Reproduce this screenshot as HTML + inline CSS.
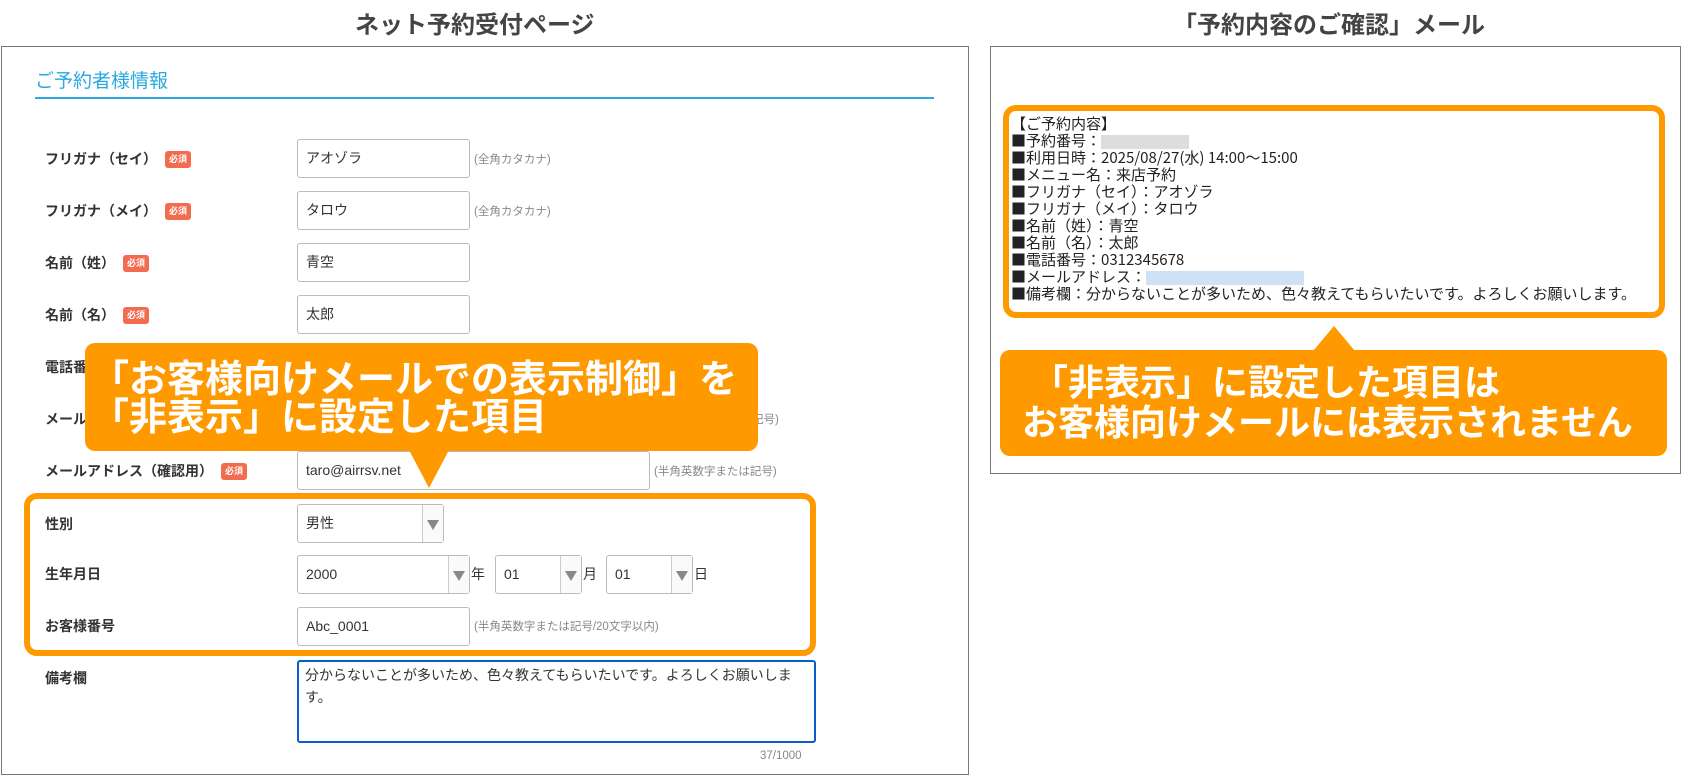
<!DOCTYPE html>
<html><head><meta charset="utf-8"><style>
*{margin:0;padding:0;box-sizing:border-box}
body{width:1683px;height:777px;background:#fff;position:relative;overflow:hidden;font-family:"Liberation Sans","Noto Sans CJK JP",sans-serif;color:#333}
.a{position:absolute;white-space:nowrap}
.t{font-size:24px;font-weight:bold;color:#444}
.lab{font-size:14px;font-weight:bold;color:#333;left:45px;line-height:20px}
.bd{display:inline-block;background:#f26c50;color:#fff;font-size:9px;font-weight:bold;border-radius:3px;padding:0 4px;height:17px;line-height:17px;vertical-align:middle;margin-left:8px;position:relative;top:-1px}
.in{position:absolute;border:1px solid #bbb;border-radius:3px;height:39px;font-size:14px;line-height:37px;padding-left:8px;background:#fff}
.hint{font-size:11.5px;color:#888;line-height:14px}
.sel::after{content:"";position:absolute;right:0;top:0;bottom:0;width:20px;border-left:1px solid #ccc;background:#fafafa}
.sel::before{content:"";position:absolute;right:4px;top:15px;border-left:6px solid transparent;border-right:6px solid transparent;border-top:10px solid #888;z-index:2}
.co{position:absolute;background:#ff9900;border-radius:10px;color:#fff;font-weight:bold}
.mail{font-size:15px;line-height:17px;color:#222;font-family:"Noto Sans CJK JP","Liberation Sans",sans-serif}
</style></head><body>
<div class="a t" style="left:355px;top:5px">ネット予約受付ページ</div>
<div class="a t" style="left:1173px;top:5px">「予約内容のご確認」メール</div>

<div class="a" style="left:1px;top:46px;width:968px;height:729px;border:1px solid #777"></div>
<div class="a" style="left:35px;top:66px;font-size:19px;color:#29a9e0">ご予約者様情報</div>
<div class="a" style="left:35px;top:97px;width:899px;height:2px;background:#29a9e0"></div>

<div class="a lab" style="top:149px">フリガナ（セイ）<span class="bd">必須</span></div>
<div class="in" style="left:297px;top:139px;width:173px">アオゾラ</div>
<div class="a hint" style="left:474px;top:153px">(全角カタカナ)</div>

<div class="a lab" style="top:201px">フリガナ（メイ）<span class="bd">必須</span></div>
<div class="in" style="left:297px;top:191px;width:173px">タロウ</div>
<div class="a hint" style="left:474px;top:205px">(全角カタカナ)</div>

<div class="a lab" style="top:253px">名前（姓）<span class="bd">必須</span></div>
<div class="in" style="left:297px;top:243px;width:173px">青空</div>

<div class="a lab" style="top:305px">名前（名）<span class="bd">必須</span></div>
<div class="in" style="left:297px;top:295px;width:173px">太郎</div>

<div class="a lab" style="top:357px">電話番号</div>
<div class="a lab" style="top:409px">メールアドレス</div>
<div class="a hint" style="left:752px;top:413px">記号)</div>

<div class="a lab" style="top:461px">メールアドレス（確認用）<span class="bd">必須</span></div>
<div class="in" style="left:297px;top:451px;width:353px">taro@airrsv.net</div>
<div class="a hint" style="left:654px;top:465px">(半角英数字または記号)</div>

<div class="a" style="left:24px;top:493px;width:792px;height:163px;border:6px solid #ff9900;border-radius:13px"></div>
<div class="a lab" style="top:514px">性別</div>
<div class="in sel" style="left:297px;top:504px;width:147px">男性</div>
<div class="a lab" style="top:564px">生年月日</div>
<div class="in sel" style="left:297px;top:555px;width:173px">2000</div>
<div class="a" style="left:471px;top:564px;font-size:14px">年</div>
<div class="in sel" style="left:495px;top:555px;width:87px">01</div>
<div class="a" style="left:583px;top:564px;font-size:14px">月</div>
<div class="in sel" style="left:606px;top:555px;width:87px">01</div>
<div class="a" style="left:694px;top:564px;font-size:14px">日</div>
<div class="a lab" style="top:616px">お客様番号</div>
<div class="in" style="left:297px;top:607px;width:173px">Abc_0001</div>
<div class="a hint" style="left:474px;top:620px">(半角英数字または記号/20文字以内)</div>

<div class="a lab" style="top:668px">備考欄</div>
<div class="a" style="left:297px;top:660px;width:519px;height:83px;border:2px solid #0a5cc8;border-radius:3px;font-size:14px;line-height:22px;padding:2px 6px;white-space:normal">分からないことが多いため、色々教えてもらいたいです。よろしくお願いしま す。</div>
<div class="a hint" style="left:760px;top:749px">37/1000</div>

<div class="co" style="left:85px;top:343px;width:673px;height:108px;font-size:38px;line-height:38px;padding:18px 0 0 6px">「お客様向けメールでの表示制御」を<br>「非表示」に設定した項目</div>
<div class="a" style="left:409px;top:450px;border-left:20px solid transparent;border-right:20px solid transparent;border-top:38px solid #ff9900"></div>

<div class="a" style="left:990px;top:46px;width:691px;height:428px;border:1px solid #777"></div>
<div class="a" style="left:1003px;top:105px;width:662px;height:213px;border:6px solid #ff9900;border-radius:13px"></div>
<div class="a mail" style="left:1011px;top:115px">【ご予約内容】<br>■予約番号：<span style="display:inline-block;width:88px;height:14px;background:#ddd;vertical-align:middle"></span><br>■利用日時：2025/08/27(水) 14:00～15:00<br>■メニュー名：来店予約<br>■フリガナ（セイ）：アオゾラ<br>■フリガナ（メイ）：タロウ<br>■名前（姓）：青空<br>■名前（名）：太郎<br>■電話番号：0312345678<br>■メールアドレス：<span style="display:inline-block;width:158px;height:14px;background:#cfe2f5;vertical-align:middle"></span><br>■備考欄：分からないことが多いため、色々教えてもらいたいです。よろしくお願いします。</div>
<div class="co" style="left:1000px;top:350px;width:667px;height:106px;font-size:36px;line-height:40px;padding:13px 0 0 22px">&nbsp;「非表示」に設定した項目は<br>お客様向けメールには表示されません</div>
<div class="a" style="left:1313px;top:326px;border-left:21px solid transparent;border-right:21px solid transparent;border-bottom:25px solid #ff9900"></div>
</body></html>
